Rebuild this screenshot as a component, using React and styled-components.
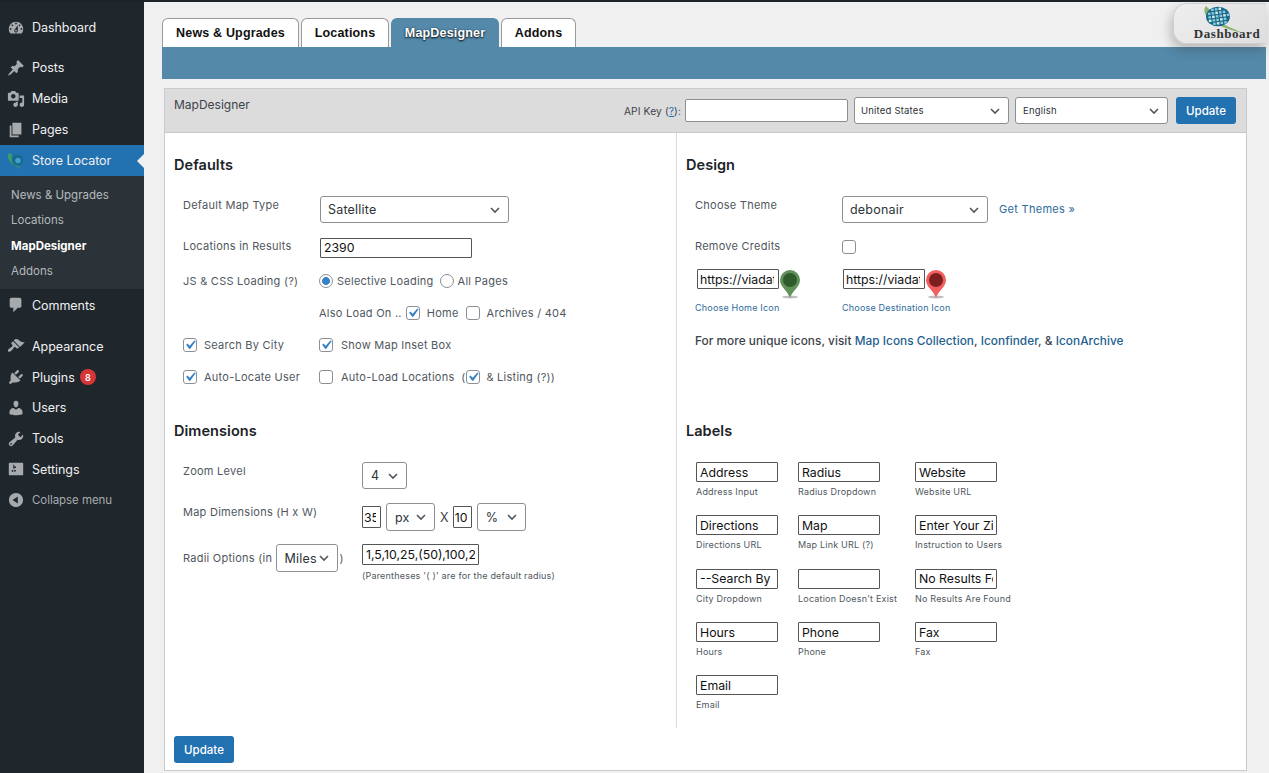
import React from 'react';
import styled, { createGlobalStyle } from 'styled-components';

const chevron = `url("data:image/svg+xml,%3Csvg xmlns='http://www.w3.org/2000/svg' viewBox='0 0 20 20'%3E%3Cpath d='M5 7.5l5 5 5-5' fill='none' stroke='%2350575e' stroke-width='2'/%3E%3C/svg%3E")`;
const tick = `url("data:image/svg+xml,%3Csvg xmlns='http://www.w3.org/2000/svg' viewBox='0 0 20 20'%3E%3Cpath d='M14.83 4.89l1.34.94-5.81 8.38H9.02L5.78 9.67l1.34-1.25 2.57 2.4z' fill='%233582c4'/%3E%3C/svg%3E")`;

const Global = createGlobalStyle`
  html, body { margin: 0; padding: 0; background: #f0f0f1; }
  body { font-family: Inter, "Liberation Sans", sans-serif; color: #3c434a; }
  * { box-sizing: border-box; }
`;

const Page = styled.div`
  width: 1269px; height: 773px; overflow: hidden; position: relative;
  display: flex; border-top: 2px solid #1d2327; background: #f0f0f1;
`;
const Sidebar = styled.nav`
  width: 144px; flex: none; background: #1f262c; padding-top: 10px;
  display: flex; flex-direction: column;
`;
const MenuItem = styled.div`
  height: ${p => p.$h || 31}px; flex: none; display: flex; align-items: center; gap: 0; position: relative;
  padding-left: 7px; font-size: 12.5px; letter-spacing: -.05px;
  color: ${p => p.$muted ? '#a7aaad' : '#f0f0f1'};
  background: ${p => p.$active ? '#2271b1' : 'transparent'};
  margin-bottom: ${p => p.$gap || 0}px;
  ${p => p.$muted ? 'font-size: 11.5px;' : ''}
`;
const MenuIcon = styled.svg`
  width: 18px; height: 18px; flex: none; margin-right: 7px; fill: #a7aaad; fill-rule: evenodd;
`;
const Pointer = styled.span`
  position: absolute; right: 0; top: 9px; width: 0; height: 0;
  border: 7px solid transparent; border-right-color: #f0f0f1; border-left-width: 0;
`;
const Submenu = styled.div`
  background: #2c3338; padding: 6.3px 0 4.7px; margin-bottom: 1px;
  display: flex; flex-direction: column;
`;
const SubItem = styled.div`
  height: 25.4px; display: flex; align-items: center; padding-left: 11px; font-size: 11.5px;
  color: ${p => p.$current ? '#fff' : '#b4b9be'}; font-weight: ${p => p.$current ? 700 : 400};
`;
const Badge = styled.span`
  width: 16px; height: 16px; border-radius: 50%; background: #d63638; color: #fff;
  font-size: 9px; display: flex; align-items: center; justify-content: center; margin-left: 5px; font-weight: 600;
`;
const Main = styled.main`
  flex: 1; min-width: 0; padding-top: 16px; display: flex; flex-direction: column;
`;
const Tabs = styled.div`
  display: flex; gap: 2px; padding-left: 18px; height: 29px;
`;
const Tab = styled.div`
  height: 29px; width: ${p => p.$w}px; display: flex; align-items: center; justify-content: center;
  border-radius: 6px 6px 0 0; font: 700 12.5px "Liberation Sans", Arial, sans-serif; letter-spacing: .17px;
  border: 1px solid ${p => p.$active ? '#5489a9' : '#999'}; border-bottom: 0;
  background: ${p => p.$active ? '#5489a9' : '#fff'};
  color: ${p => p.$active ? '#fff' : '#111'};
  ${p => p.$active ? 'text-shadow: 0 1px 2px rgba(0,0,0,.95), 0 0 2px rgba(0,0,0,.4);' : ''}
`;
const Band = styled.div`
  height: 32px; margin: 0 3px 0 18px; background: #5489a9;
`;
const Panel = styled.section`
  margin: 9px 22px 0 20px; height: 683px; background: #fff; border: 1px solid #c9cccf;
  display: flex; flex-direction: column;
`;
const PanelHead = styled.header`
  height: 44px; flex: none; background: #dcdcdc; border-bottom: 1px solid #c8c8c8;
  display: flex; padding: 8px 10px 0 9px;
`;
const PanelTitle = styled.div`
  flex: 1; font-size: 12px; color: #3c434a; line-height: 15px;
`;
const HeadControls = styled.div`
  display: flex; align-items: flex-start; gap: 6px; height: 28px;
`;
const ApiLabel = styled.span`
  font-size: 10.2px; color: #3c434a; margin-right: -2px; line-height: 28px; letter-spacing: .13px;
  a { color: #2271b1; }
`;
const ApiInput = styled.input`
  width: 163px; height: 23px; margin-top: 2px; border: 1px solid #8c8f94; border-radius: 2px; background: #fff;
`;
const Select = styled.select`
  appearance: none; width: ${p => p.$w}px; height: ${p => p.$h || 27}px; border: 1px solid #8c8f94; border-radius: 3px;
  background: #fff ${chevron} no-repeat right 5px center / 16px; color: #2c3338;
  font: ${p => p.$small ? '9.5px' : '12.5px'} Inter, "Liberation Sans", sans-serif;
  padding: 0 ${p => p.$pad || 24}px 0 ${p => p.$pl || 8}px; margin: 0 0 0 ${p => p.$ml || 0}px; letter-spacing: .2px; flex: none;
`;
const Button = styled.button`
  width: 60px; height: 27px; background: #2271b1; color: #fff; border: 0; border-radius: 3px;
  font: 500 11.5px Inter, "Liberation Sans", sans-serif; padding: 0;
`;
const HeadButton = styled(Button)`margin-left: 2px;`;
const Columns = styled.div`
  flex: none; height: 595px; display: grid; grid-template-columns: 511px 1fr;
`;
const Column = styled.div`
  padding: 22px 0 0 9px;
  & + & { border-left: 1px solid #dcdcde; }
`;
const Heading = styled.h3`
  margin: 0; height: 20px; font-size: 14.5px; line-height: 20px; font-weight: 600; color: #1d2327; letter-spacing: .05px;
`;
const Section = styled.div`
  height: ${p => p.$h}px; padding-left: 9px; padding-top: ${p => p.$pt}px;
`;
const Row = styled.div`
  height: ${p => p.$h}px; margin-bottom: ${p => p.$mb || 0}px; display: flex; align-items: center;
  font-size: 11px; color: #50575e; letter-spacing: .25px;
`;
const IconsRow = styled(Row)`
  align-items: flex-start; margin-left: 2px;
`;
const Label = styled.span`
  width: ${p => p.$w}px; flex: none; font-size: 11px; color: #50575e; letter-spacing: .25px;
  ${p => p.$up ? 'align-self: flex-start; line-height: 18px;' : ''}
`;
const RadiiLabel = styled.span`
  width: 179px; flex: none; display: flex; align-items: center; height: 28px;
`;
const Closer = styled.span`
  margin-left: 2px;
`;
const TextInput = styled.input`
  width: ${p => p.$w}px; height: ${p => p.$h || 20}px; flex: none; border: 1px solid #555; border-radius: 1px; padding: 0 ${p => p.$pad ?? 3}px;
  font: 12.3px Inter, "Liberation Sans", sans-serif; color: #111; background: #fff; margin: 0;
  ${p => p.$top ? 'align-self: flex-start;' : ''}
`;
const NarrowInput = styled(TextInput)`
  padding: 0 4px 0 1px;
`;
const UrlInput = styled(TextInput)`
  padding: 0 4px 0 2px;
`;
const Check = styled.input.attrs({ type: 'checkbox' })`
  appearance: none; width: 14px; height: 14px; border: 1px solid #8c8f94; border-radius: 3px; background: #fff no-repeat center / 18px;
  margin: 0 ${p => p.$mr ?? 7}px 0 ${p => p.$ml || 0}px; flex: none;
  &:checked { background-image: ${tick}; }
`;
const Radio = styled.input.attrs({ type: 'radio' })`
  appearance: none; width: 14px; height: 14px; border: 1px solid #8c8f94; border-radius: 50%; background: #fff;
  margin: 0 4px 0 ${p => p.$ml || 0}px; flex: none; position: relative;
  &:checked { background: radial-gradient(circle, #3582c4 0 3.6px, #fff 4.2px); }
`;
const Hint = styled.div`
  font-size: 9px; color: #50575e; letter-spacing: .2px; margin-top: ${p => p.$mt || 0}px; margin-left: ${p => p.$ml || 0}px; white-space: nowrap;
`;
const LinkHint = styled(Hint)`color: #2d6a9a;`;
const RadiiHint = styled(Hint)`padding-left: 179px;`;
const Link = styled.a`
  color: #2d6a9a; font-size: 11px; margin: -2px 0 0 11px; letter-spacing: .3px; text-decoration: none;
`;
const Times = styled.span`
  font-size: 12.5px; margin: 0 4px 0 5px; color: #3c434a;
`;
const IconGroup = styled.div`
  width: 146px; flex: none;
`;
const IconLine = styled.div`
  display: flex; align-items: flex-start; height: 30px;
`;
const Pin = styled.svg`
  width: 24px; height: 31px; flex: none; margin-left: -1px; overflow: visible;
`;
const Note = styled.div`
  font-size: 11.8px; font-weight: 500; color: #3c434a; letter-spacing: .05px;
  a { color: #22608f; font-weight: 500; text-decoration: none; }
`;
const LabelGrid = styled.div`
  display: grid; grid-template-columns: 102px 117px 110px; grid-auto-rows: 53.35px; margin-left: 1px;
`;
const LabelCell = styled.div`
  display: flex; flex-direction: column; align-items: flex-start;
`;
const Footer = styled.div`
  padding: 8px 0 0 9px;
`;
const Corner = styled.div`
  position: absolute; right: 3px; top: 1px; width: 93px; height: 41px;
  border-radius: 14px 0 0 14px; border: 1px solid #cfcfcf; border-right: 0;
  background: linear-gradient(135deg, #eeeeee, #dedede);
  box-shadow: -2px 6px 12px rgba(40,40,40,.28);
  display: flex; flex-direction: column; align-items: center;
  font: 700 13px "Liberation Serif", "DejaVu Serif", serif; color: #333; letter-spacing: .55px;
  padding-top: 2px; padding-left: 14px; line-height: 14px;
`;
const CornerText = styled.span`
  margin-top: -6px;
`;
const LogoGlobe = styled.svg`
  width: 42px; height: 27px; flex: none; align-self: flex-start; margin-left: 13px;
`;
const MenuGlobe = styled.svg`
  width: 20px; height: 19px; flex: none; margin: 0 6px 0 -1px;
`;

const P = {
  dashboard: 'M3.76 16h12.48c1.1-1.37 1.76-3.11 1.76-5 0-4.42-3.58-8-8-8s-8 3.58-8 8c0 1.89.66 3.63 1.76 5zM10 4c.55 0 1 .45 1 1s-.45 1-1 1-1-.45-1-1 .45-1 1-1zM6 6c.55 0 1 .45 1 1s-.45 1-1 1-1-.45-1-1 .45-1 1-1zm8 0c.55 0 1 .45 1 1s-.45 1-1 1-1-.45-1-1 .45-1 1-1zm-5.37 5.55L12 7v6c0 1.1-.9 2-2 2s-2-.9-2-2c0-.57.24-1.08.63-1.45zM4 10c.55 0 1 .45 1 1s-.45 1-1 1-1-.45-1-1 .45-1 1-1zm12 0c.55 0 1 .45 1 1s-.45 1-1 1-1-.45-1-1 .45-1 1-1zm-5 3c0-.55-.45-1-1-1s-1 .45-1 1 .45 1 1 1 1-.45 1-1z',
  posts: 'M10.44 3.02l1.82-1.82 6.36 6.35-1.83 1.82c-1.05-.68-2.48-.57-3.41.36l-.75.75c-.92.93-1.04 2.35-.35 3.41l-1.83 1.82-2.41-2.41-2.8 2.79c-.42.42-3.38 2.71-3.8 2.29s1.86-3.39 2.28-3.81l2.79-2.79L4.1 9.36l1.83-1.82c1.05.69 2.48.57 3.4-.36l.75-.75c.93-.92 1.05-2.35.36-3.41z',
  media: 'M13 11V4c0-.55-.45-1-1-1h-1.67L9 1H5L3.67 3H2c-.55 0-1 .45-1 1v7c0 .55.45 1 1 1h10c.55 0 1-.45 1-1zM7 4.5c1.38 0 2.5 1.12 2.5 2.5S8.38 9.5 7 9.5 4.5 8.38 4.5 7 5.62 4.5 7 4.5zM14 6h5v10.5c0 1.38-1.12 2.5-2.5 2.5S14 17.88 14 16.5s1.12-2.5 2.5-2.5c.17 0 .34.02.5.05V9h-3V6zm-4 8.05V13h2v3.5c0 1.38-1.12 2.5-2.5 2.5S7 17.88 7 16.5 8.12 14 9.5 14c.17 0 .34.02.5.05z',
  pages: 'M6 15V2h10v13H6zm-1 1h8v2H3V5h2v11z',
  comments: 'M5 2h9c1.1 0 2 .9 2 2v7c0 1.1-.9 2-2 2h-2l-5 5v-5H5c-1.1 0-2-.9-2-2V4c0-1.1.9-2 2-2z',
  appearance: 'M14.48 11.06L7.41 3.99l1.5-1.5c.5-.56 2.3-.47 3.51.32 1.21.8 1.43 1.28 2.91 2.1 1.18.64 2.45 1.26 4.45.85zm-.71.71L6.7 4.7 4.93 6.47c-.39.39-.39 1.02 0 1.41l1.06 1.06c.39.39.39 1.03 0 1.42-.6.6-1.43 1.11-2.21 1.69-.35.26-.7.53-1.01.84C1.43 13.23.4 14.98 1.4 15.98c1 1 2.75-.03 4.08-1.37.31-.31.58-.66.85-1.02.57-.78 1.08-1.61 1.69-2.21.39-.39 1.02-.39 1.41 0l1.06 1.06c.39.39 1.02.39 1.41 0z',
  plugins: 'M13.11 4.36L9.87 7.6 8 5.73l3.24-3.24c.35-.34 1.05-.2 1.56.32.52.51.66 1.21.31 1.55zm-8 1.77l.91-1.12 9.01 9.01-1.19.84c-.71.71-2.63 1.16-3.82 1.16H6.14L4.9 17.26c-.59.59-1.54.59-2.12 0-.59-.58-.59-1.53 0-2.12l1.24-1.24v-3.88c0-1.13.4-3.19 1.09-3.89zm7.26 3.97l3.24-3.24c.34-.35 1.04-.21 1.55.31.52.51.66 1.21.31 1.55l-3.24 3.25z',
  users: 'M10 9.25c-2.27 0-2.73-3.44-2.73-3.44C7 4.02 7.82 2 9.97 2c2.16 0 2.98 2.02 2.71 3.81 0 0-.41 3.44-2.68 3.44zm0 2.57L12.72 10c2.39 0 4.52 2.33 4.52 4.53v2.49s-3.65 1.13-7.24 1.13c-3.65 0-7.24-1.13-7.24-1.13v-2.49c0-2.25 1.94-4.48 4.47-4.48z',
  tools: 'M16.68 9.77c-1.34 1.34-3.3 1.67-4.95.99l-5.41 6.52c-.99.99-2.59.99-3.58 0s-.99-2.59 0-3.57l6.52-5.42c-.68-1.65-.35-3.61.99-4.95 1.28-1.28 3.12-1.62 4.72-1.06l-2.89 2.89 2.82 2.82 2.86-2.87c.53 1.58.18 3.39-1.08 4.65zM3.81 16.21c.4.39 1.04.39 1.43 0 .4-.4.4-1.04 0-1.43-.39-.4-1.03-.4-1.43 0-.39.39-.39 1.03 0 1.43z',
  settings: 'M18 16V4c0-.55-.45-1-1-1H3c-.55 0-1 .45-1 1v12c0 .55.45 1 1 1h14c.55 0 1-.45 1-1zM8 11h1c.55 0 1 .45 1 1s-.45 1-1 1H8v1.5c0 .28-.22.5-.5.5s-.5-.22-.5-.5V13H6c-.55 0-1-.45-1-1s.45-1 1-1h1V5.5c0-.28.22-.5.5-.5s.5.22.5.5V7h1c.55 0 1 .45 1 1s-.45 1-1 1h-1v5.5c0 .28-.22.5-.5.5s-.5-.22-.5-.5V9z',
  collapse: 'M10 2.16c4.33 0 7.84 3.51 7.84 7.84s-3.51 7.84-7.84 7.84S2.16 14.33 2.16 10 5.71 2.16 10 2.16zm2 11.72V6.12L6.18 9.97z',
};

const Icon = ({ name }) => <MenuIcon viewBox="0 0 20 20"><path d={P[name]} /></MenuIcon>;

const cells = [];
for (let r = 0; r < 5; r++) {
  for (let c = 0; c < 6; c++) {
    const x = 7.4 + c * 3.7 + (r - 2) * 0.5;
    const y = 1.9 + r * 3.5 - (c - 2.5) * 0.5;
    const dx = (x + 1.3 - 17) / 12;
    const dy = (y + 1.2 - 10.5) / 9.8;
    if (dx * dx + dy * dy < 0.8) cells.push([x, y, r + c]);
  }
}

const LogoArt = () => (
  <LogoGlobe viewBox="0 0 42 27">
    <path d="M5 0C-2 9 14 21 42 27 23 19 8 12 8 3z" fill="#8fb36f" />
    <ellipse cx="17" cy="10.5" rx="12" ry="9.8" fill="#176a8c" />
    {cells.map(([x, y, k]) => (
      <rect key={`${x}-${y}`} x={x} y={y} width="2.6" height="2.4" fill={k % 3 === 0 ? '#d7ecd9' : '#8cc6de'} />
    ))}
  </LogoGlobe>
);

const MenuGlobeArt = () => (
  <MenuGlobe viewBox="0 0 20 19">
    <path d="M3 2C-1 8 6 15 17 18 9 14 4.5 9 6 3z" fill="#3f9a6c" />
    <circle cx="11.5" cy="9" r="5.6" fill="#176a8c" />
    <circle cx="12" cy="9.5" r="2.8" fill="#3fa0cc" />
  </MenuGlobe>
);

const PinArt = ({ outer, inner }) => (
  <Pin viewBox="0 0 24 31">
    <ellipse cx="12" cy="28" rx="8" ry="1.4" fill="#888" opacity=".55" />
    <path d="M12 29C10 22 2 18 2 11a10 10 0 0 1 20 0c0 7-8 11-10 18z" fill={outer} />
    <circle cx="12" cy="11" r="7" fill={inner} />
  </Pin>
);

const labels = [
  ['Address', 'Address Input'], ['Radius', 'Radius Dropdown'], ['Website', 'Website URL'],
  ['Directions', 'Directions URL'], ['Map', 'Map Link URL (?)'], ['Enter Your Zip', 'Instruction to Users'],
  ['--Search By City', 'City Dropdown'], ['', "Location Doesn't Exist"], ['No Results Found', 'No Results Are Found'],
  ['Hours', 'Hours'], ['Phone', 'Phone'], ['Fax', 'Fax'],
  ['Email', 'Email'],
];

export default function App() {
  return (
    <Page>
      <Global />
      <Sidebar>
        <MenuItem $gap={9}><Icon name="dashboard" />Dashboard</MenuItem>
        <MenuItem><Icon name="posts" />Posts</MenuItem>
        <MenuItem><Icon name="media" />Media</MenuItem>
        <MenuItem><Icon name="pages" />Pages</MenuItem>
        <MenuItem $active>
          <MenuGlobeArt />
          Store Locator<Pointer />
        </MenuItem>
        <Submenu>
          <SubItem>News &amp; Upgrades</SubItem>
          <SubItem>Locations</SubItem>
          <SubItem $current>MapDesigner</SubItem>
          <SubItem>Addons</SubItem>
        </Submenu>
        <MenuItem $gap={10.4}><Icon name="comments" />Comments</MenuItem>
        <MenuItem $h={30.75}><Icon name="appearance" />Appearance</MenuItem>
        <MenuItem $h={30.75}><Icon name="plugins" />Plugins<Badge>8</Badge></MenuItem>
        <MenuItem $h={30.75}><Icon name="users" />Users</MenuItem>
        <MenuItem $h={30.75}><Icon name="tools" />Tools</MenuItem>
        <MenuItem $h={30.75}><Icon name="settings" />Settings</MenuItem>
        <MenuItem $h={30} $muted><Icon name="collapse" />Collapse menu</MenuItem>
      </Sidebar>
      <Main>
        <Tabs>
          <Tab $w={137}>News &amp; Upgrades</Tab>
          <Tab $w={88}>Locations</Tab>
          <Tab $w={108} $active>MapDesigner</Tab>
          <Tab $w={75}>Addons</Tab>
        </Tabs>
        <Band />
        <Panel>
          <PanelHead>
            <PanelTitle>MapDesigner</PanelTitle>
            <HeadControls>
              <ApiLabel>API Key (<a href="#k">?</a>):</ApiLabel>
              <ApiInput />
              <Select $w={155} $small $pl={6} defaultValue="United States"><option>United States</option></Select>
              <Select $w={153} $small $pl={7} defaultValue="English"><option>English</option></Select>
              <HeadButton>Update</HeadButton>
            </HeadControls>
          </PanelHead>
          <Columns>
            <Column>
              <Heading>Defaults</Heading>
              <Section $h={246} $pt={21}>
                <Row $h={27} $mb={14}><Label $w={137} $up>Default Map Type</Label><Select $w={189} $pl={7} defaultValue="Satellite"><option>Satellite</option></Select></Row>
                <Row $h={21} $mb={13}><Label $w={137} $up>Locations in Results</Label><TextInput $w={152} defaultValue="2390" /></Row>
                <Row $h={20} $mb={12}>
                  <Label $w={136}>JS &amp; CSS Loading <span>(?)</span></Label>
                  <Radio name="load" defaultChecked /><span>Selective Loading</span>
                  <Radio name="load" $ml={6} /><span>All Pages</span>
                </Row>
                <Row $h={20} $mb={12}>
                  <Label $w={136} />
                  <span>Also Load On ..</span>
                  <Check defaultChecked $ml={4} $mr={7} /><span>Home</span>
                  <Check $ml={7} $mr={7} /><span>Archives / 404</span>
                </Row>
                <Row $h={20} $mb={12}>
                  <Check defaultChecked />
                  <Label $w={115}>Search By City</Label>
                  <Check defaultChecked $mr={8} /><span>Show Map Inset Box</span>
                </Row>
                <Row $h={20}>
                  <Check defaultChecked />
                  <Label $w={115}>Auto-Locate User</Label>
                  <Check $mr={8} /><span>Auto-Load Locations&nbsp; (</span>
                  <Check defaultChecked $ml={1} $mr={6} /><span>&amp; Listing (?))</span>
                </Row>
              </Section>
              <Heading>Dimensions</Heading>
              <Section $h={200} $pt={21}>
                <Row $h={27} $mb={14}><Label $w={179} $up>Zoom Level</Label><Select $w={45} $pad={18} defaultValue="4"><option>4</option></Select></Row>
                <Row $h={28} $mb={13}>
                  <Label $w={179} $up>Map Dimensions (H x W)</Label>
                  <NarrowInput $w={19} $h={22} defaultValue="350" />
                  <Select $w={49} $h={28} $ml={5} defaultValue="px"><option>px</option></Select>
                  <Times>X</Times>
                  <NarrowInput $w={19} $h={22} defaultValue="100" />
                  <Select $w={49} $h={28} $ml={5} defaultValue="%"><option>%</option></Select>
                </Row>
                <Row $h={28}>
                  <RadiiLabel>
                    Radii Options (in&nbsp;<Select $w={62} $h={28} $pad={16} defaultValue="Miles"><option>Miles</option></Select><Closer>)</Closer>
                  </RadiiLabel>
                  <TextInput $w={117} $h={21} $pad={3} $top defaultValue="1,5,10,25,(50),100,200" />
                </Row>
                <RadiiHint $mt={-2}>(Parentheses '( )' are for the default radius)</RadiiHint>
              </Section>
            </Column>
            <Column>
              <Heading>Design</Heading>
              <Section $h={246} $pt={21}>
                <Row $h={27} $mb={14}><Label $w={147} $up>Choose Theme</Label><Select $w={146} $pl={7} defaultValue="debonair"><option>debonair</option></Select><Link href="#t">Get Themes »</Link></Row>
                <Row $h={20} $mb={12}><Label $w={147} $up>Remove Credits</Label><Check /></Row>
                <IconsRow $h={46} $mb={19}>
                  <IconGroup>
                    <IconLine><UrlInput $w={82} defaultValue="https://viadat" /><PinArt outer="#5f9159" inner="#2f5a2a" /></IconLine>
                    <LinkHint $mt={3} $ml={-2}>Choose Home Icon</LinkHint>
                  </IconGroup>
                  <IconGroup>
                    <IconLine><UrlInput $w={82} defaultValue="https://viadat" /><PinArt outer="#f05f60" inner="#7e1f1f" /></IconLine>
                    <LinkHint $mt={3} $ml={-1}>Choose Destination Icon</LinkHint>
                  </IconGroup>
                </IconsRow>
                <Note>For more unique icons, visit <a href="#m">Map Icons Collection</a>, <a href="#i">Iconfinder</a>, &amp; <a href="#a">IconArchive</a></Note>
              </Section>
              <Heading>Labels</Heading>
              <Section $h={270} $pt={21}>
                <LabelGrid>
                  {labels.map(([value, hint]) => (
                    <LabelCell key={hint}>
                      <TextInput $w={82} defaultValue={value} />
                      <Hint $mt={4}>{hint}</Hint>
                    </LabelCell>
                  ))}
                </LabelGrid>
              </Section>
            </Column>
          </Columns>
          <Footer><Button>Update</Button></Footer>
        </Panel>
      </Main>
      <Corner>
        <LogoArt />
        <CornerText>Dashboard</CornerText>
      </Corner>
    </Page>
  );
}
